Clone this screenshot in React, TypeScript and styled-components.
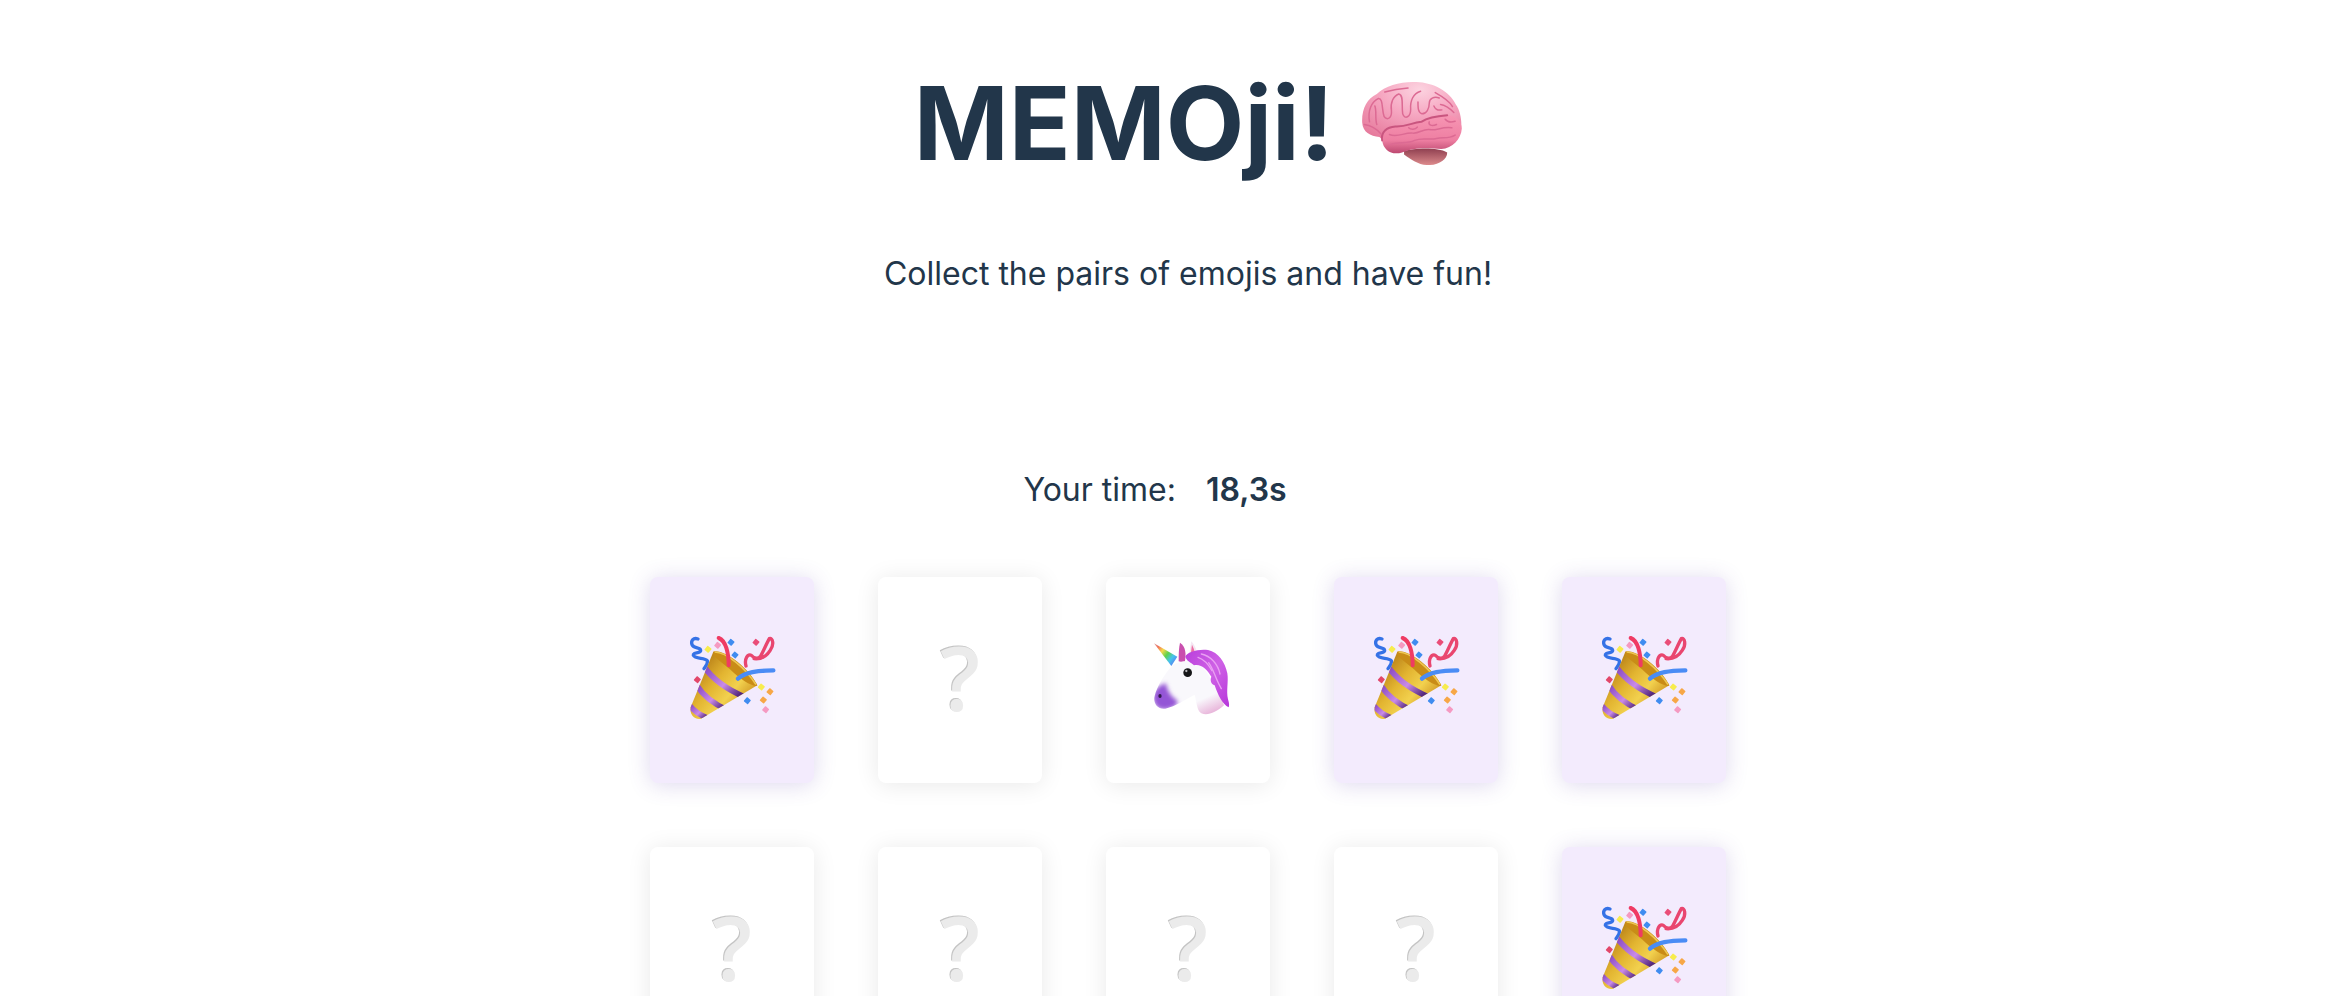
import React from 'react';
import styled, { createGlobalStyle } from 'styled-components';

const GlobalStyle = createGlobalStyle`
  html, body {
    margin: 0;
    padding: 0;
    background: #fff;
    overflow: hidden;
  }
  body {
    font-family: Inter, 'Liberation Sans', sans-serif;
    color: #22364a;
  }
`;

function BrainIcon() {
  return (
    <BrainSvg viewBox="60 68 300 250" aria-hidden="true">
      <defs>
        <radialGradient id="brainFill" cx="0.58" cy="0.12" r="0.85">
          <stop offset="0" stopColor="#fcd3e0" />
          <stop offset="0.45" stopColor="#f6a8c2" />
          <stop offset="1" stopColor="#e67a9c" />
        </radialGradient>
        <linearGradient id="brainLobe" x1="0" y1="0" x2="0" y2="1">
          <stop offset="0" stopColor="#f796b4" />
          <stop offset="0.65" stopColor="#ee7fa2" />
          <stop offset="1" stopColor="#bd4870" />
        </linearGradient>
        <linearGradient id="brainStem" x1="0" y1="0" x2="0" y2="1">
          <stop offset="0" stopColor="#8f3f50" />
          <stop offset="1" stopColor="#dc8a8c" />
        </linearGradient>
      </defs>
      <path d="M186 276C212 268 284 262 316 280C316 302 288 320 254 318C228 316 208 302 186 286Z" fill="url(#brainStem)" />
      <path
        d="M60 190C58 150 74 118 104 104C128 80 172 68 212 68C266 66 322 92 342 136C358 158 362 196 356 220C340 256 310 262 280 258L140 262C124 244 118 240 112 234C84 230 62 220 60 190Z"
        fill="url(#brainFill)"
      />
      <path
        d="M120 244C116 218 134 204 160 202C192 204 210 190 238 188C256 176 288 170 316 168C340 166 360 186 360 208C358 240 332 268 298 270C262 266 214 264 180 280C150 290 124 274 120 244Z"
        fill="url(#brainLobe)"
      />
      <g fill="none" stroke="#dc6a93" strokeWidth="4.5" strokeLinecap="round" strokeLinejoin="round">
        <path d="M120 244C116 218 134 204 160 202C192 204 210 190 238 188C256 176 288 170 316 168" strokeWidth="6" stroke="#c9557f" />
        <path d="M82 188C76 154 88 128 108 118C124 116 118 150 126 172C136 186 150 176 148 154C144 130 154 110 170 104C186 106 178 140 182 164C188 182 206 174 206 150C204 124 214 102 236 96" />
        <path d="M228 128C228 146 228 160 240 164C254 164 262 148 262 132C262 118 276 110 292 116" />
        <path d="M66 196C84 198 102 208 116 224" />
        <path d="M98 140C104 154 98 178 104 196" />
        <path d="M128 98C150 92 174 88 198 86" />
        <path d="M280 100C298 110 322 124 332 142" />
        <path d="M296 136C312 138 326 150 336 160" />
        <path d="M276 140C280 150 290 154 300 152" />
        <path d="M142 226C166 236 186 220 212 222C234 224 244 206 268 212C284 214 302 202 330 206" />
        <path d="M146 256C172 246 194 256 218 244C240 234 264 244 284 238C304 234 320 240 340 228" />
        <path d="M262 188C258 198 270 202 284 196" />
        <path d="M200 206C206 212 220 212 226 204" />
        <path d="M310 180C316 188 328 190 340 186" />
      </g>
    </BrainSvg>
  );
}

function PartyIcon() {
  const confetti = [
    [114, 118, '#f7ec4e'],
    [143, 106, '#f59ac2'],
    [183, 97, '#3f8cf0'],
    [195, 135, '#3f8cf0'],
    [258, 97, '#ea4d78'],
    [82, 209, '#e2476a'],
    [274, 231, '#f7ec4e'],
    [300, 245, '#f7a746'],
    [280, 270, '#f7a746'],
    [232, 272, '#3f8cf0'],
    [287, 299, '#f59ac2'],
  ] as const;

  return (
    <EmojiSvg viewBox="-9 15 390 390" aria-hidden="true">
      <defs>
        <linearGradient id="coneGold" x1="0.15" y1="0.15" x2="0.85" y2="0.75">
          <stop offset="0" stopColor="#b57c16" />
          <stop offset="0.4" stopColor="#e3b531" />
          <stop offset="0.7" stopColor="#f2d14e" />
          <stop offset="1" stopColor="#cf9420" />
        </linearGradient>
        <linearGradient id="stripe" x1="0" y1="0" x2="1" y2="0.7">
          <stop offset="0" stopColor="#8444c0" />
          <stop offset="0.6" stopColor="#c98ae8" />
          <stop offset="1" stopColor="#56297f" />
        </linearGradient>
        <clipPath id="coneClip">
          <path d="M130 125L62 292C58 312 72 330 92 327L262 226C236 178 180 130 130 125Z" />
        </clipPath>
      </defs>
      <g fill="none" strokeLinecap="round" strokeLinejoin="round">
        <path d="M84 87C70 82 62 92 66 104C72 118 92 110 92 122C90 132 68 126 70 136C76 148 104 142 112 152C114 162 106 170 102 176" stroke="#3572e6" strokeWidth="10" />
        <path d="M228 168C222 146 234 130 244 136C254 146 264 148 272 138C280 124 288 104 298 86C308 82 314 104 300 122C290 138 272 148 252 146" stroke="#e9466f" strokeWidth="10" />
      </g>
      <path d="M130 125L62 292C58 312 72 330 92 327L262 226C236 178 180 130 130 125Z" fill="url(#coneGold)" />
      <g clipPath="url(#coneClip)" fill="none" stroke="url(#stripe)" strokeWidth="17">
        <path d="M102 170C128 208 170 238 226 262" />
        <path d="M80 226C100 258 126 280 172 300" />
        <path d="M58 286C72 304 90 316 116 326" />
      </g>
      <path d="M130 125C160 116 234 170 262 226C254 234 214 212 180 178C150 152 124 136 130 125Z" fill="#c98c17" />
      <path d="M134 126C170 126 228 176 258 224" fill="none" stroke="#eec752" strokeWidth="5" />
      <g fill="none" strokeLinecap="round">
        <path d="M204 206C226 186 262 182 310 181" stroke="#4a8cf5" strokeWidth="13" />
        <path d="M176 166C176 130 168 92 146 84" stroke="#ef3b63" strokeWidth="12" />
      </g>
      {confetti.map(([x, y, color]) => (
        <rect
          key={`${x}-${y}`}
          x={x - 8}
          y={y - 8}
          width="16"
          height="16"
          rx="2"
          fill={color}
          transform={`rotate(40 ${x} ${y})`}
        />
      ))}
    </EmojiSvg>
  );
}

function UnicornIcon() {
  return (
    <EmojiSvg viewBox="-21 -15 390 390" aria-hidden="true">
      <defs>
        <linearGradient id="horn" x1="1" y1="0.8" x2="0" y2="0">
          <stop offset="0" stopColor="#5a78f0" />
          <stop offset="0.22" stopColor="#45c4ee" />
          <stop offset="0.42" stopColor="#5fd24a" />
          <stop offset="0.62" stopColor="#f7d84a" />
          <stop offset="0.82" stopColor="#f0705a" />
          <stop offset="1" stopColor="#d8a0a0" />
        </linearGradient>
        <linearGradient id="neck" x1="0.4" y1="0.4" x2="0.75" y2="1">
          <stop offset="0.6" stopColor="#f9f8fc" />
          <stop offset="1" stopColor="#e9b9dc" />
        </linearGradient>
        <linearGradient id="mane" x1="0" y1="0" x2="1" y2="1">
          <stop offset="0" stopColor="#b93fdc" />
          <stop offset="0.5" stopColor="#cf62e6" />
          <stop offset="1" stopColor="#b636da" />
        </linearGradient>
        <filter id="soft" x="-30%" y="-30%" width="160%" height="160%">
          <feGaussianBlur stdDeviation="6" />
        </filter>
        <clipPath id="headClip">
          <path d="M128 136C148 120 186 118 210 132C240 168 268 210 282 256C258 278 232 288 214 280C200 270 200 246 194 224C164 240 138 258 106 266C84 270 68 250 74 228C82 198 102 164 128 136Z" />
        </clipPath>
      </defs>
      <path d="M72 70L142 110L124 138Z" fill="url(#horn)" />
      <path d="M150 68C166 78 170 100 164 128L146 124C146 106 146 86 150 68Z" fill="#c94fae" />
      <path d="M184 64C198 80 206 104 206 134L176 124C178 102 180 82 184 64Z" fill="#f4e7f2" />
      <path d="M186 74C194 90 198 106 198 126L182 120C182 102 184 88 186 74Z" fill="#ee6fa4" />
      <path
        d="M128 136C148 120 186 118 210 132C240 168 268 210 282 256C258 278 232 288 214 280C200 270 200 246 194 224C164 240 138 258 106 266C84 270 68 250 74 228C82 198 102 164 128 136Z"
        fill="url(#neck)"
      />
      <g clipPath="url(#headClip)">
        <path d="M108 190C84 196 66 214 70 240C76 268 100 274 124 264C140 258 146 250 140 240C122 230 112 212 108 190Z" fill="#9455d6" filter="url(#soft)" />
      </g>
      <path
        d="M166 110C170 96 206 86 234 90C266 98 284 124 292 160C296 186 288 212 294 238C298 250 298 256 296 262C278 254 264 226 254 196C242 192 240 180 244 170C232 148 212 130 192 136C182 126 170 124 166 110Z"
        fill="url(#mane)"
      />
      <g fill="none" stroke="#e9a0f2" strokeWidth="4" strokeLinecap="round">
        <path d="M214 102C242 108 264 132 270 162" />
        <path d="M236 128C252 150 256 176 274 206" />
        <path d="M204 112C222 118 236 134 246 152" />
      </g>
      <circle cx="173" cy="158" r="13" fill="#161618" />
      <circle cx="169" cy="153" r="3.5" fill="#b8b8bc" />
      <ellipse cx="90" cy="228" rx="5" ry="6" fill="#2f1c4a" />
    </EmojiSvg>
  );
}

const deck = [
  ['party', 'hidden', 'unicorn', 'party', 'party'],
  ['hidden', 'hidden', 'hidden', 'hidden', 'party'],
];

export default function App() {
  return (
    <Page>
      <GlobalStyle />
      <Header>
        <Title>
          MEMOji!
          <BrainIcon />
        </Title>
        <Subtitle>Collect the pairs of emojis and have fun!</Subtitle>
      </Header>

      <Timer>
        <span>Your time:</span>
        <strong>18,3s</strong>
      </Timer>

      <Board>
        {deck.flat().map((card, index) => (
          <Card key={index} $matched={card === 'party'}>
            {card === 'party' && <PartyIcon />}
            {card === 'unicorn' && <UnicornIcon />}
            {card === 'hidden' && <Hidden>?</Hidden>}
          </Card>
        ))}
      </Board>
    </Page>
  );
}

const Page = styled.main`
  height: 100vh;
  overflow: hidden;
  box-sizing: border-box;
  padding: 61px 0 0 42px;
  display: flex;
  flex-direction: column;
  align-items: center;
`;

const Header = styled.header`
  display: flex;
  flex-direction: column;
  align-items: center;
`;

const Title = styled.h1`
  margin: 0;
  display: flex;
  align-items: center;
  gap: 28px;
  font-size: 102px;
  line-height: 124px;
  font-weight: 700;
  color: #22364a;
`;

const BrainSvg = styled.svg`
  width: 100px;
  height: 83px;
  flex-shrink: 0;
  filter: blur(0.4px);
`;

const Subtitle = styled.p`
  margin: 67px 0 0;
  font-size: 32px;
  line-height: 44px;
  font-weight: 400;
  color: #22364a;
`;

const Timer = styled.div`
  margin: 174px 66px 0 0;
  display: flex;
  align-items: center;
  gap: 30px;
  font-size: 32px;
  line-height: 40px;

  strong {
    font-weight: 600;
  }
`;

const Board = styled.section`
  margin-top: 67px;
  display: grid;
  grid-template-columns: repeat(5, 164px);
  grid-auto-rows: 206px;
  gap: 64px;
`;

const Card = styled.div<{ $matched: boolean }>`
  display: flex;
  align-items: center;
  justify-content: center;
  border-radius: 8px;
  background: ${({ $matched }) => ($matched ? '#f3ebfd' : '#ffffff')};
  box-shadow: ${({ $matched }) =>
    $matched ? '0 2px 22px rgba(90, 60, 170, 0.2)' : '0 2px 24px rgba(0, 0, 0, 0.09)'};
`;

const EmojiSvg = styled.svg`
  width: 130px;
  height: 130px;
  filter: blur(0.4px);
`;

const Hidden = styled.span`
  font-family: 'Open Sans', sans-serif;
  font-size: 88px;
  line-height: 0.8;
  font-weight: 600;
  color: #ebebeb;
  text-shadow: -1px -1px 0 #c4c4c4;
  margin-bottom: 6px;
`;
